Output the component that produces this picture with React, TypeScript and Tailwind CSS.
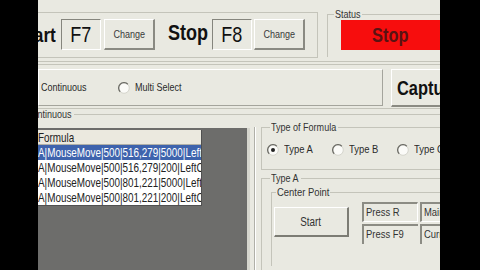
import React from "react";

const FONT = "font-['Liberation_Sans',Arial,sans-serif]";

function T({
  children,
  className = "",
  o = "origin-left",
  s = "scale-x-[0.82]",
}: {
  children: React.ReactNode;
  className?: string;
  o?: string;
  s?: string;
}) {
  return <span className={`inline-block whitespace-nowrap ${s} ${o} ${className}`}>{children}</span>;
}

function Radio({ checked = false }: { checked?: boolean }) {
  return (
    <svg width="12" height="12" viewBox="0 0 12 12" className="shrink-0">
      <circle cx="6" cy="6" r="5.3" fill="#fbfbf8" stroke="#d4d4cc" strokeWidth="1" />
      <path d="M9.8 2.2 A5.3 5.3 0 0 0 2.2 9.8" stroke="#6e6e68" strokeWidth="1.3" fill="none" />
      {checked && <circle cx="6" cy="6" r="2" fill="#222" />}
    </svg>
  );
}

const rows = [
  "A|MouseMove|500|516,279|5000|LeftClick",
  "A|MouseMove|500|516,279|200|LeftClick",
  "A|MouseMove|500|801,221|5000|LeftClick",
  "A|MouseMove|500|801,221|200|LeftClick",
];

const sunken =
  "border-t border-l border-[#85857d] border-r border-b border-r-white border-b-white";
const raised =
  "border-t border-l border-white border-r-2 border-b-2 border-r-[#8a8a82] border-b-[#8a8a82]";

export default function App() {
  return (
    <div className={`w-[480px] h-[270px] bg-black flex overflow-hidden ${FONT}`}>
      <div className="w-[38px] shrink-0 bg-black" />
      <div className="w-[402px] shrink-0 bg-[#e9e9e1] overflow-hidden flex flex-col text-[#1c1c1c]">
        {/* Top: hotkeys + status */}
        <div className="flex items-start shrink-0">
          <div className="mt-[12px] w-[280px] h-[46px] shrink-0 border-t border-b border-r border-[#c4c4ba]">
            <div className="flex items-center mt-[6px] h-[31px]">
              <div className="w-[18px] shrink-0 flex justify-end">
                <T o="origin-right" className="text-[21px] font-bold leading-none text-[#111]">Start</T>
              </div>
              <div className={`ml-[5px] w-[40px] h-[31px] shrink-0 ${sunken} flex items-center justify-center text-[22px] leading-none text-[#111]`}>
                <T o="origin-center">F7</T>
              </div>
              <div className={`ml-[3px] w-[51px] h-[31px] shrink-0 ${raised} flex items-center justify-center text-[11px] text-[#3a3a3a]`}>
                <T o="origin-center">Change</T>
              </div>
              <div className="ml-[13px] w-[40px] shrink-0">
                <T className="text-[22px] font-bold leading-none text-[#111]">Stop</T>
              </div>
              <div className={`ml-[4px] w-[40px] h-[31px] shrink-0 ${sunken} flex items-center justify-center text-[22px] leading-none text-[#111]`}>
                <T o="origin-center">F8</T>
              </div>
              <div className={`ml-[2px] w-[51px] h-[31px] shrink-0 ${raised} flex items-center justify-center text-[11px] text-[#3a3a3a]`}>
                <T o="origin-center">Change</T>
              </div>
            </div>
          </div>
          <fieldset className="ml-[9px] mt-[8px] flex-1 h-[49px] border-l border-t border-[#c4c4ba] p-0 m-0 min-w-0">
            <legend className="ml-[6px] w-[28px] pl-[1px] text-[11px] leading-[12px] text-[#333]">
              <T>Status</T>
            </legend>
            <div className="ml-[13px] h-[30px] bg-[#f70d0d] flex items-center justify-center text-[20px] font-bold text-[#5a1212] leading-none">
              <T o="origin-center">Stop</T>
            </div>
          </fieldset>
        </div>

        {/* separator */}
        <div className="mt-[3px] h-[4px] shrink-0 border-t border-b border-[#c4c4ba]" />

        {/* Mode row */}
        <div className="mt-[4px] flex h-[38px] shrink-0">
          <div className="w-[345px] h-[37px] shrink-0 border-t border-l border-white border-r border-b border-r-[#a4a49c] border-b-[#a4a49c] flex items-center text-[11px] text-[#2a2a2a]">
            <div className="w-[79px] shrink-0 flex items-center">
              <div className="-ml-[14px] flex items-center">
                <Radio />
                <span className="ml-[4px]">
                  <T>Continuous</T>
                </span>
              </div>
            </div>
            <div className="flex items-center">
              <Radio />
              <span className="ml-[5px]">
                <T>Multi Select</T>
              </span>
            </div>
          </div>
          <div className={`ml-[8px] flex-1 h-[38px] ${raised} flex items-center pl-[5px]`}>
            <T className="text-[20px] font-bold leading-none text-[#111]">Capture</T>
          </div>
        </div>

        <div className="mt-[1px] shrink-0 border-t border-[#c4c4ba]" />

        {/* Lower area */}
        <fieldset className="flex-1 min-h-0 border-t border-[#c4c4ba] p-0 m-0 min-w-0">
          <legend className="-ml-[12px] w-[48px] text-[11px] leading-[11px] text-[#333]">
            <T>Continuous</T>
          </legend>
          <div className="flex h-full">
            <div className="mt-[8px] w-[212px] shrink-0 bg-[#6d6d6b] border-r-[3px] border-[#d6d6ce]">
              <div className="mt-[2px] w-[164px] bg-white border-r border-b border-[#505050] text-[13px] leading-[15px]">
                <div className="h-[15px] bg-[#ebe9df] border-b border-[#b0b0a8] overflow-hidden text-[#222]">
                  <T s="scale-x-[0.76]">Formula</T>
                </div>
                {rows.map((r, i) => (
                  <div
                    key={i}
                    className={`h-[15px] overflow-hidden ${i === 0 ? "bg-[#3e63ad] text-white" : "text-[#222]"}`}
                  >
                    <T s="scale-x-[0.76]">{r}</T>
                  </div>
                ))}
              </div>
            </div>
            <div className="ml-[4px] mt-[7px] w-[2px] shrink-0 border-l border-[#b0b0a8] border-r border-r-white" />
            <div className="ml-[5px] flex-1 flex flex-col min-w-0">
              <fieldset className="mt-[1px] h-[49px] shrink-0 border-l border-t border-b border-[#c4c4ba] p-0 m-0 min-w-0">
                <legend className="ml-[8px] w-[68px] pl-[1px] text-[11px] leading-[12px] text-[#333]">
                  <T>Type of Formula</T>
                </legend>
                <div className="mt-[9px] h-[16px] flex items-center text-[11.5px] text-[#2a2a2a]">
                  <div className="ml-[5px] w-[65px] shrink-0 flex items-center">
                    <Radio checked />
                    <span className="ml-[5px]">
                      <T>Type A</T>
                    </span>
                  </div>
                  <div className="w-[65px] shrink-0 flex items-center">
                    <Radio />
                    <span className="ml-[5px]">
                      <T>Type B</T>
                    </span>
                  </div>
                  <div className="w-[65px] shrink-0 flex items-center">
                    <Radio />
                    <span className="ml-[5px]">
                      <T>Type C</T>
                    </span>
                  </div>
                </div>
              </fieldset>
              <fieldset className="mt-[2px] flex-1 border-l border-t border-[#c4c4ba] p-0 m-0 min-w-0">
                <legend className="ml-[8px] w-[31px] pl-[1px] text-[11px] leading-[12px] text-[#333]">
                  <T>Type A</T>
                </legend>
                <fieldset className="mt-[2px] ml-[9px] border-l border-t border-[#c4c4ba] p-0 min-w-0 h-[80px]">
                  <legend className="ml-[4px] w-[54px] pl-[1px] text-[11.5px] leading-[12px] text-[#333]">
                    <T>Center Point</T>
                  </legend>
                  <div className="flex items-start">
                    <div className="mt-[9px] ml-[2px] w-[75px] h-[30px] shrink-0 border-t border-l border-white border-r-2 border-b-2 border-r-[#7c7c74] border-b-[#7c7c74] flex items-center justify-center text-[12px] text-[#333]">
                      <T o="origin-center">Start</T>
                    </div>
                    <div className="ml-[13px] mt-[4px] grid grid-cols-[56px_60px] gap-[2px] text-[11.5px] leading-[16px] text-[#333]">
                      <div className="h-[20px] border-t-2 border-l-2 border-[#8c8c84] border-b border-r border-b-white border-r-white pl-[2px] overflow-hidden">
                        <T>Press R</T>
                      </div>
                      <div className="h-[20px] border-t-2 border-l-2 border-[#8c8c84] border-b border-r border-b-white border-r-white pl-[2px] overflow-hidden">
                        <T>Main</T>
                      </div>
                      <div className="h-[20px] border-t-2 border-l-2 border-[#8c8c84] pl-[2px] overflow-hidden">
                        <T>Press F9</T>
                      </div>
                      <div className="h-[20px] border-t-2 border-l-2 border-[#8c8c84] pl-[2px] overflow-hidden">
                        <T>Current</T>
                      </div>
                    </div>
                  </div>
                </fieldset>
              </fieldset>
            </div>
          </div>
        </fieldset>
      </div>
      <div className="flex-1 bg-black" />
    </div>
  );
}
